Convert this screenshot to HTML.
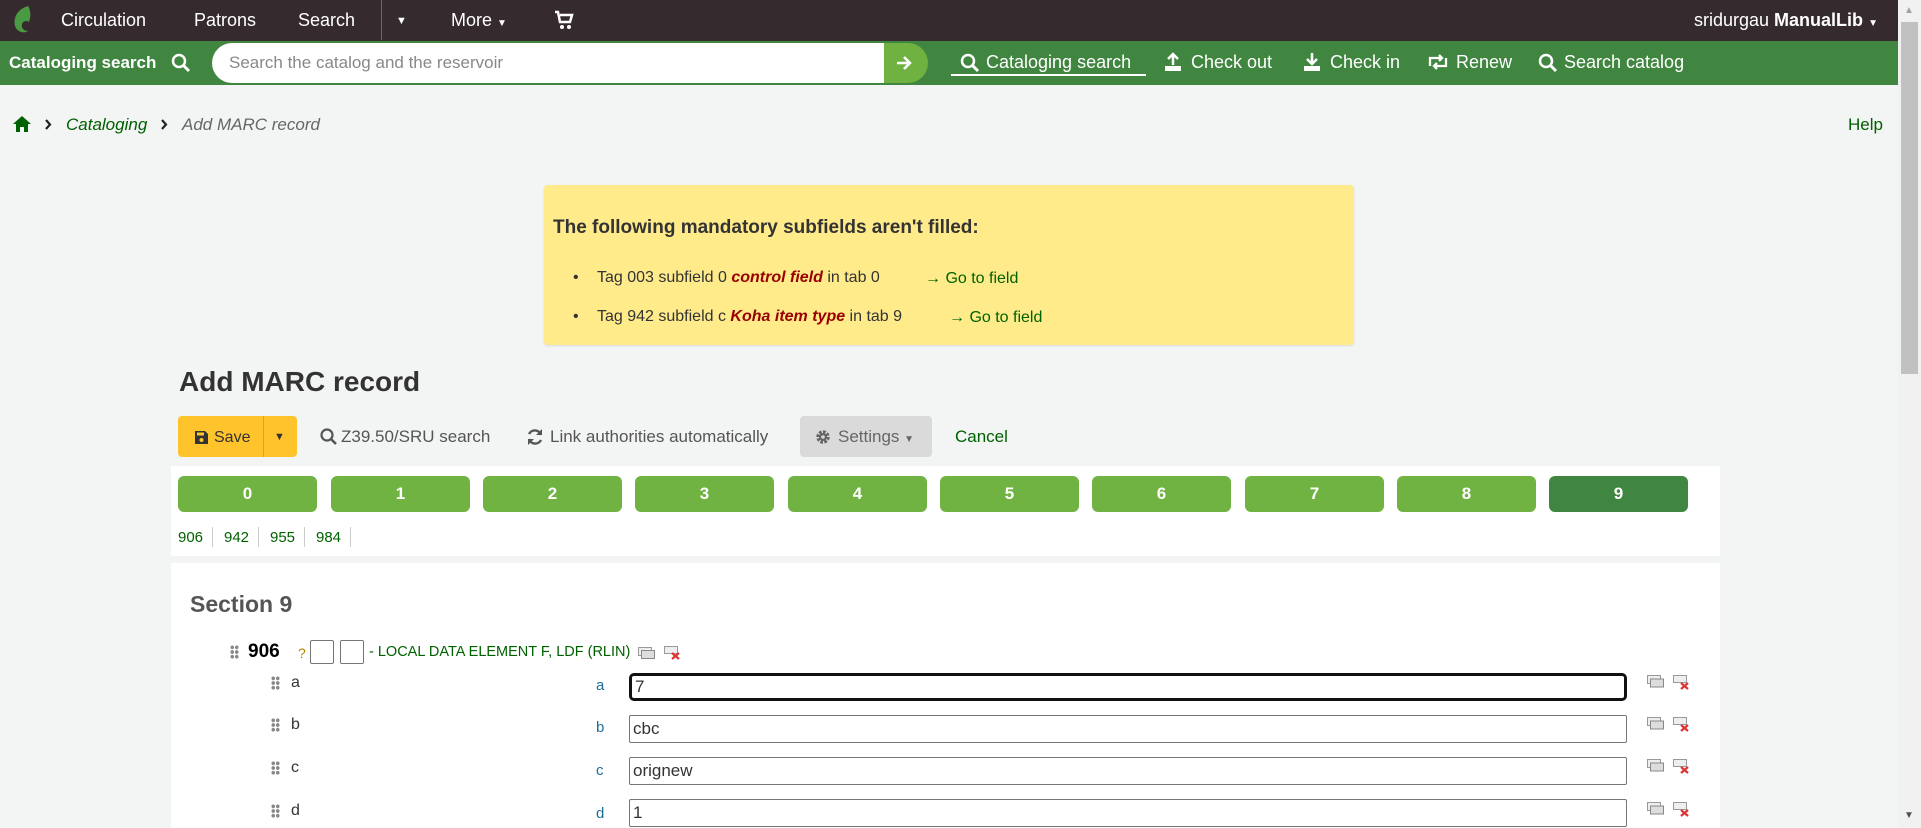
<!DOCTYPE html>
<html><head><meta charset="utf-8"><style>
*{box-sizing:border-box;margin:0;padding:0}
body{width:1921px;height:828px;overflow:hidden;background:#f3f4f4;font-family:"Liberation Sans",sans-serif;position:relative;color:#333}
.a{position:absolute;white-space:nowrap}
.nav{top:0;left:0;width:1898px;height:41px;background:#352b2e}
.nav .a{color:#fff;font-size:18px;top:10px}
.gbar{top:41px;left:0;width:1898px;height:44px;background:#408540}
.gbar .a{color:#fff;font-size:18px}
.tab{position:absolute;top:476px;width:139px;height:36px;background:#71b343;border-radius:6px;color:#fff;font-weight:bold;font-size:17px;text-align:center;line-height:36px}
.inp{position:absolute;left:629px;width:998px;height:28px;border:1px solid #767676;border-radius:2px;background:#fff;font-size:17px;padding-left:3px;line-height:26px;color:#333}
.hdl{position:absolute;width:9px;height:14px;background:radial-gradient(circle,#888 1.7px,transparent 2px) 0 0/4.5px 4.7px}
.lab{position:absolute;font-size:16px;color:#333}
.sl{position:absolute;left:596px;font-size:15px;color:#1a6d99}
.ic{position:absolute}
</style></head><body>
<div class="a nav">
 <svg class="a" style="left:12px;top:5px" width="22" height="30" viewBox="0 0 22 30"><path d="M16 1C6 4 1 12 3 21c2 6 9 8 13 5-4 0-7-3-6-7 1-3 5-4 7-2 2-6 2-11-1-16z" fill="#4a9a44"/></svg>
 <span class="a" style="left:61px">Circulation</span>
 <span class="a" style="left:194px">Patrons</span>
 <span class="a" style="left:298px">Search</span>
 <div class="a" style="left:381px;top:0;width:1px;height:40px;background:#408540"></div>
 <span class="a" style="left:396px;top:15px !important;font-size:11px">▼</span>
 <span class="a" style="left:451px">More <span style="font-size:10px">▼</span></span>
 <svg class="a" style="left:554px;top:10px" width="20" height="20" viewBox="0 0 20 20"><path d="M1 2h3l2 10h10l2-7H6" fill="none" stroke="#fff" stroke-width="2.5"/><circle cx="8" cy="17" r="2" fill="#fff"/><circle cx="15" cy="17" r="2" fill="#fff"/></svg>
 <span class="a" style="left:1694px">sridurgau <b>ManualLib</b> <span style="font-size:10px">▼</span></span>
</div>
<div class="a gbar">
 <span class="a" style="left:9px;top:12px;font-weight:bold;font-size:17px">Cataloging search</span>
 <svg class="a" style="left:171px;top:12px" width="20" height="20" viewBox="0 0 20 20"><circle cx="8" cy="8" r="6" fill="none" stroke="#fff" stroke-width="2.5"/><path d="M12 12l6 6" stroke="#fff" stroke-width="3"/></svg>
 <div class="a" style="left:212px;top:2px;width:700px;height:40px;background:#fff;border-radius:20px"></div>
 <span class="a" style="left:229px;top:12px;color:#888;font-size:17px">Search the catalog and the reservoir</span>
 <div class="a" style="left:884px;top:2px;width:44px;height:40px;background:#6fb242;border-radius:0 20px 20px 0"></div>
 <svg class="a" style="left:895px;top:13px" width="18" height="18" viewBox="0 0 18 18"><path d="M2 9h13M9 3l6 6-6 6" fill="none" stroke="#fff" stroke-width="2.5"/></svg>
 <svg class="a" style="left:960px;top:12px" width="20" height="20" viewBox="0 0 20 20"><circle cx="8" cy="8" r="6" fill="none" stroke="#fff" stroke-width="2.5"/><path d="M12 12l6 6" stroke="#fff" stroke-width="3"/></svg>
 <span class="a" style="left:986px;top:11px">Cataloging search</span>
 <div class="a" style="left:951px;top:33px;width:195px;height:2px;background:#fff"></div>
 <svg class="a" style="left:1163px;top:11px" width="20" height="20" viewBox="0 0 20 20"><path d="M10 2v11M5 7l5-5 5 5" fill="none" stroke="#fff" stroke-width="2.5"/><rect x="2" y="14" width="16" height="5" fill="#fff"/></svg>
 <span class="a" style="left:1191px;top:11px">Check out</span>
 <svg class="a" style="left:1302px;top:11px" width="20" height="20" viewBox="0 0 20 20"><path d="M10 1v11M5 7l5 5 5-5" fill="none" stroke="#fff" stroke-width="2.5"/><rect x="2" y="14" width="16" height="5" fill="#fff"/></svg>
 <span class="a" style="left:1330px;top:11px">Check in</span>
 <svg class="a" style="left:1427px;top:13px" width="22" height="16" viewBox="0 0 22 16"><path d="M3 12V4h12M12 1l3 3-3 3M19 4v8H7M10 15l-3-3 3-3" fill="none" stroke="#fff" stroke-width="2.3"/></svg>
 <span class="a" style="left:1456px;top:11px">Renew</span>
 <svg class="a" style="left:1538px;top:12px" width="20" height="20" viewBox="0 0 20 20"><circle cx="8" cy="8" r="6" fill="none" stroke="#fff" stroke-width="2.5"/><path d="M12 12l6 6" stroke="#fff" stroke-width="3"/></svg>
 <span class="a" style="left:1564px;top:11px">Search catalog</span>
</div>
<svg class="a" style="left:13px;top:116px" width="18" height="16" viewBox="0 0 18 16"><path d="M9 0L0 8h3v8h4v-5h4v5h4V8h3z" fill="#006100"/></svg>
<svg class="a" style="left:45px;top:119px" width="7" height="11" viewBox="0 0 7 11"><path d="M1 1l4 4.5L1 10" fill="none" stroke="#222" stroke-width="2.2"/></svg>
<span class="a" style="left:66px;top:115px;font-size:17px;font-style:italic;color:#006100">Cataloging</span>
<svg class="a" style="left:161px;top:119px" width="7" height="11" viewBox="0 0 7 11"><path d="M1 1l4 4.5L1 10" fill="none" stroke="#222" stroke-width="2.2"/></svg>
<span class="a" style="left:182px;top:115px;font-size:17px;font-style:italic;color:#666">Add MARC record</span>
<span class="a" style="left:1848px;top:115px;font-size:17px;color:#006100">Help</span>

<div class="a" style="left:544px;top:185px;width:810px;height:160px;background:#ffeb8a;border-radius:4px;box-shadow:0 1px 2px rgba(0,0,0,.1)"></div>
<span class="a" style="left:553px;top:217px;font-size:19px;font-weight:bold;color:#333">The following mandatory subfields aren't filled:</span>
<span class="a" style="left:573px;top:269px;font-size:16px">•</span>
<span class="a" style="left:597px;top:269px;font-size:16px">Tag 003 subfield 0 <b style="color:#900;font-style:italic">control field</b> in tab 0</span>
<span class="a" style="left:925px;top:270px;font-size:16px;color:#006100">→ Go to field</span>
<span class="a" style="left:573px;top:308px;font-size:16px">•</span>
<span class="a" style="left:597px;top:308px;font-size:16px">Tag 942 subfield c <b style="color:#900;font-style:italic">Koha item type</b> in tab 9</span>
<span class="a" style="left:949px;top:309px;font-size:16px;color:#006100">→ Go to field</span>

<span class="a" style="left:179px;top:366px;font-size:28px;font-weight:bold;color:#333">Add MARC record</span>
<div class="a" style="left:178px;top:416px;width:119px;height:41px;background:#ffc32b;border-radius:4px"></div>
<div class="a" style="left:263px;top:416px;width:1px;height:41px;background:#e0a800"></div>
<svg class="a" style="left:195px;top:431px" width="13" height="13" viewBox="0 0 13 13"><path d="M0 0h10l3 3v10H0z" fill="#333"/><rect x="2" y="1.5" width="7" height="3" fill="#ffc32b"/><circle cx="6.5" cy="9" r="2" fill="#ffc32b"/></svg>
<span class="a" style="left:214px;top:429px;font-size:16px">Save</span>
<span class="a" style="left:274px;top:431px;font-size:11px">▼</span>
<svg class="a" style="left:320px;top:428px" width="18" height="18" viewBox="0 0 18 18"><circle cx="7" cy="7" r="5.5" fill="none" stroke="#555" stroke-width="2.2"/><path d="M11 11l5 5" stroke="#555" stroke-width="2.6"/></svg>
<span class="a" style="left:341px;top:427px;font-size:17px;color:#555">Z39.50/SRU search</span>
<svg class="a" style="left:526px;top:428px" width="18" height="18" viewBox="0 0 18 18"><path d="M15 7A6.5 6.5 0 0 0 3 6M3 11a6.5 6.5 0 0 0 12 1" fill="none" stroke="#555" stroke-width="2.4"/><path d="M16 1v6h-6zM2 17v-6h6z" fill="#555"/></svg>
<span class="a" style="left:550px;top:427px;font-size:17px;color:#555">Link authorities automatically</span>
<div class="a" style="left:800px;top:416px;width:132px;height:41px;background:#dadada;border-radius:4px"></div>
<svg class="a" style="left:815px;top:429px" width="16" height="16" viewBox="0 0 16 16"><circle cx="8" cy="8" r="5" fill="none" stroke="#666" stroke-width="3.5" stroke-dasharray="2.6 1.3"/><circle cx="8" cy="8" r="4" fill="#666"/><circle cx="8" cy="8" r="1.8" fill="#dadada"/></svg>
<span class="a" style="left:838px;top:427px;font-size:17px;color:#666">Settings <span style="font-size:10px">▼</span></span>
<span class="a" style="left:955px;top:427px;font-size:17px;color:#006100">Cancel</span>

<div class="a" style="left:171px;top:466px;width:1549px;height:90px;background:#fff"></div>
<div class="tab" style="left:178px">0</div><div class="tab" style="left:331px">1</div><div class="tab" style="left:483px">2</div><div class="tab" style="left:635px">3</div><div class="tab" style="left:788px">4</div><div class="tab" style="left:940px">5</div><div class="tab" style="left:1092px">6</div><div class="tab" style="left:1245px">7</div><div class="tab" style="left:1397px">8</div><div class="tab" style="left:1549px;background:#408540">9</div>
<span class="a" style="left:178px;top:529px;font-size:15px;color:#006100">906</span>
<div class="a" style="left:212px;top:527px;width:1px;height:20px;background:#ccc"></div>
<span class="a" style="left:224px;top:529px;font-size:15px;color:#006100">942</span>
<div class="a" style="left:258px;top:527px;width:1px;height:20px;background:#ccc"></div>
<span class="a" style="left:270px;top:529px;font-size:15px;color:#006100">955</span>
<div class="a" style="left:304px;top:527px;width:1px;height:20px;background:#ccc"></div>
<span class="a" style="left:316px;top:529px;font-size:15px;color:#006100">984</span>
<div class="a" style="left:350px;top:527px;width:1px;height:20px;background:#ccc"></div>

<div class="a" style="left:171px;top:563px;width:1549px;height:265px;background:#fff"></div>
<span class="a" style="left:190px;top:591px;font-size:23px;font-weight:bold;color:#555">Section 9</span>
<div class="hdl" style="left:230px;top:645px"></div>
<span class="a" style="left:248px;top:641px;font-size:19px;font-weight:bold;color:#000">906</span>
<span class="a" style="left:298px;top:645px;font-size:14px;color:#b08800">?</span>
<div class="a" style="left:310px;top:640px;width:24px;height:24px;border:1px solid #767676;border-radius:2px"></div>
<div class="a" style="left:340px;top:640px;width:24px;height:24px;border:1px solid #767676;border-radius:2px"></div>
<span class="a" style="left:369px;top:644px;font-size:14.5px;color:#006100">- LOCAL DATA ELEMENT F, LDF (RLIN)</span>
<svg class="ic" style="left:638px;top:647px" width="17" height="12" viewBox="0 0 17 12"><rect x="0.5" y="0.5" width="13" height="8" fill="#eee" stroke="#999"/><rect x="3.5" y="3.5" width="13" height="8" fill="#ddd" stroke="#888"/></svg>
<svg class="ic" style="left:664px;top:646px" width="17" height="14" viewBox="0 0 17 14"><rect x="0.5" y="0.5" width="13" height="7" fill="#eee" stroke="#999"/><path d="M8 7l7 6M15 7l-7 6" stroke="#d33" stroke-width="2.2"/></svg>

<div class="hdl" style="left:271px;top:676px"></div><span class="lab" style="left:291px;top:674px">a</span><span class="sl" style="left:596px;top:677px">a</span>
<div class="inp" style="top:673px;border:3px solid #111;border-radius:5px;line-height:22px">7</div>
<div class="hdl" style="left:271px;top:718px"></div><span class="lab" style="left:291px;top:716px">b</span><span class="sl" style="top:719px">b</span>
<div class="inp" style="top:715px">cbc</div>
<div class="hdl" style="left:271px;top:761px"></div><span class="lab" style="left:291px;top:759px">c</span><span class="sl" style="top:762px">c</span>
<div class="inp" style="top:757px">orignew</div>
<div class="hdl" style="left:271px;top:804px"></div><span class="lab" style="left:291px;top:802px">d</span><span class="sl" style="top:805px">d</span>
<div class="inp" style="top:799px">1</div>
<svg class="ic" style="left:1647px;top:675px" width="17" height="13" viewBox="0 0 17 13"><rect x="0.5" y="0.5" width="13" height="8" fill="#eee" stroke="#999"/><rect x="3.5" y="4" width="13" height="8" fill="#ddd" stroke="#888"/></svg>
<svg class="ic" style="left:1673px;top:675px" width="17" height="15" viewBox="0 0 17 15"><rect x="0.5" y="0.5" width="13" height="7" fill="#eee" stroke="#999"/><path d="M8 8l7 6M15 8l-7 6" stroke="#d33" stroke-width="2.2"/></svg>
<svg class="ic" style="left:1647px;top:717px" width="17" height="13" viewBox="0 0 17 13"><rect x="0.5" y="0.5" width="13" height="8" fill="#eee" stroke="#999"/><rect x="3.5" y="4" width="13" height="8" fill="#ddd" stroke="#888"/></svg>
<svg class="ic" style="left:1673px;top:717px" width="17" height="15" viewBox="0 0 17 15"><rect x="0.5" y="0.5" width="13" height="7" fill="#eee" stroke="#999"/><path d="M8 8l7 6M15 8l-7 6" stroke="#d33" stroke-width="2.2"/></svg>
<svg class="ic" style="left:1647px;top:759px" width="17" height="13" viewBox="0 0 17 13"><rect x="0.5" y="0.5" width="13" height="8" fill="#eee" stroke="#999"/><rect x="3.5" y="4" width="13" height="8" fill="#ddd" stroke="#888"/></svg>
<svg class="ic" style="left:1673px;top:759px" width="17" height="15" viewBox="0 0 17 15"><rect x="0.5" y="0.5" width="13" height="7" fill="#eee" stroke="#999"/><path d="M8 8l7 6M15 8l-7 6" stroke="#d33" stroke-width="2.2"/></svg>
<svg class="ic" style="left:1647px;top:802px" width="17" height="13" viewBox="0 0 17 13"><rect x="0.5" y="0.5" width="13" height="8" fill="#eee" stroke="#999"/><rect x="3.5" y="4" width="13" height="8" fill="#ddd" stroke="#888"/></svg>
<svg class="ic" style="left:1673px;top:802px" width="17" height="15" viewBox="0 0 17 15"><rect x="0.5" y="0.5" width="13" height="7" fill="#eee" stroke="#999"/><path d="M8 8l7 6M15 8l-7 6" stroke="#d33" stroke-width="2.2"/></svg>

<div class="a" style="left:1898px;top:0;width:23px;height:828px;background:#f1f1f1"></div>
<div class="a" style="left:1901px;top:22px;width:17px;height:352px;background:#c1c1c1"></div>
<span class="a" style="left:1904px;top:5px;font-size:10px;color:#a3a3a3">▲</span>
<span class="a" style="left:1904px;top:810px;font-size:10px;color:#505050">▼</span>
</body></html>
